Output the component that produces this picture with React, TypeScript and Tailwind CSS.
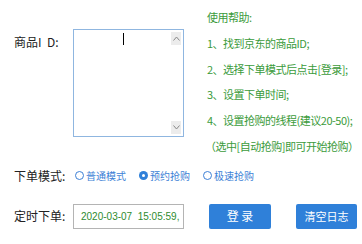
const font = "font-['Noto_Sans_CJK_SC','Noto_Sans',sans-serif]";

function Radio({ label, checked }: { label: string; checked?: boolean }) {
  return (
    <div className="flex items-center gap-[2px]">
      {checked ? (
        <span className="flex h-[9px] w-[9px] items-center justify-center rounded-full bg-[#2f80d9]">
          <span className="h-[3px] w-[3px] rounded-full bg-white" />
        </span>
      ) : (
        <span className="h-[9px] w-[9px] rounded-full border border-[#3d80d6] bg-white" />
      )}
      <span className="text-[10px] text-[#3d7fd6]">{label}</span>
    </div>
  );
}

function Arrow({ up }: { up?: boolean }) {
  return (
    <svg width="7" height="5" viewBox="0 0 7 5" className="text-[#888]">
      <path
        d={up ? "M0.5 4.5 L3.5 1 L6.5 4.5" : "M0.5 0.5 L3.5 4 L6.5 0.5"}
        fill="none"
        stroke="currentColor"
        strokeWidth="1"
      />
    </svg>
  );
}

export default function App() {
  const help = [
    "使用帮助:",
    "1、找到京东的商品ID;",
    "2、选择下单模式后点击[登录];",
    "3、设置下单时间;",
    "4、设置抢购的线程(建议20-50);",
    "（选中[自动抢购]即可开始抢购）",
  ];

  return (
    <div className={`h-[244px] w-[362px] overflow-hidden bg-white pl-[14px] ${font}`}>
      <div className="flex items-start">
        <div className="w-[59px] pt-[33px] text-[12px] leading-[18px] text-[#222]">商品I&nbsp;&nbsp;D:</div>
        <div className="mt-[29px] flex h-[108px] w-[111px] border border-[#8fb6e0] bg-white">
          <div className="relative flex-1">
            <span className="absolute left-[49px] top-[3px] h-[12px] w-px bg-black" />
          </div>
          <div className="flex w-[12px] flex-col justify-between py-[2px]">
            <div className="flex h-[13px] w-[10px] items-center justify-center bg-[#ececec]">
              <Arrow up />
            </div>
            <div className="flex h-[13px] w-[10px] items-center justify-center bg-[#ececec]">
              <Arrow />
            </div>
          </div>
        </div>
        <div className="ml-[23px] pt-[5px] text-[11px] leading-[25.8px] tracking-[-0.5px] text-[#3b9b3b]">
          {help.map((line, i) => (
            <div key={i} className={i === 5 ? "-ml-[2px] whitespace-nowrap" : "whitespace-nowrap"}>
              {line}
            </div>
          ))}
        </div>
      </div>

      <div className="mt-[4px] flex h-[24px] items-center">
        <div className="w-[61px] text-[12px] text-[#222]">下单模式:</div>
        <div className="flex items-center gap-[13px]">
          <Radio label="普通模式" />
          <Radio label="预约抢购" checked />
          <Radio label="极速抢购" />
        </div>
      </div>

      <div className="mt-[16px] flex h-[25px] items-center">
        <div className="w-[59px] text-[12px] text-[#222]">定时下单:</div>
        <div className="flex h-[25px] w-[111px] items-center whitespace-nowrap border border-[#b4b4b4] pl-[7px] font-['Liberation_Sans',sans-serif] text-[10px] text-[#2e8b2e]">
          2020-03-07&nbsp;&nbsp;15:05:59,
        </div>
        <button className="ml-[25px] h-[25px] w-[62px] rounded-[2px] bg-[#2f80d9] text-[12px] text-white">
          登&nbsp;录
        </button>
        <button className="ml-[25px] h-[25px] w-[61px] rounded-[2px] bg-[#2f80d9] text-[11px] text-white">
          清空日志
        </button>
      </div>
    </div>
  );
}
